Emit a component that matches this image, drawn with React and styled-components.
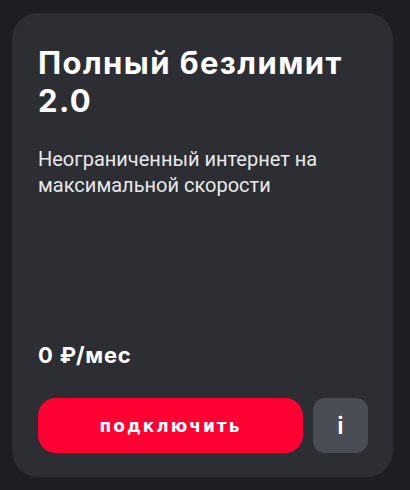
import React from "react";
import styled, { createGlobalStyle } from "styled-components";

const GlobalStyle = createGlobalStyle`
  html, body {
    margin: 0;
    padding: 0;
    background: #1d1e22;
  }
`;

const Page = styled.div`
  width: 410px;
  height: 490px;
  box-sizing: border-box;
  padding: 13px 17px 13px 12px;
`;

const Card = styled.div`
  height: 100%;
  box-sizing: border-box;
  background: #2d2e33;
  border-radius: 26px;
  padding: 31px 25px 24px 26px;
  display: flex;
  flex-direction: column;
`;

const Title = styled.h2`
  margin: 0;
  font-family: Inter, "DejaVu Sans", sans-serif;
  font-weight: 700;
  font-size: 31px;
  line-height: 38px;
  color: #ffffff;
  letter-spacing: 1.4px;
`;

const Description = styled.p`
  margin: 26px 0 0;
  font-family: Roboto, "Liberation Sans", sans-serif;
  font-size: 20px;
  line-height: 26px;
  color: #e8e8ea;
`;

const Price = styled.div`
  margin-top: auto;
  font-family: Inter, "DejaVu Sans", sans-serif;
  font-weight: 700;
  font-size: 22px;
  letter-spacing: 0.8px;
  color: #ffffff;
`;

const Actions = styled.div`
  display: flex;
  gap: 10px;
  margin-top: 30px;
`;

const ConnectButton = styled.button`
  flex: 1;
  height: 55px;
  border: none;
  border-radius: 18px;
  background: #ff0032;
  color: #ffffff;
  font-family: "DejaVu Sans", sans-serif;
  font-weight: bold;
  font-size: 17px;
  letter-spacing: 2px;
  cursor: pointer;
`;

const InfoButton = styled.button`
  width: 55px;
  height: 55px;
  border: none;
  border-radius: 12px;
  background: #4a4d55;
  color: #ffffff;
  font-family: Inter, "DejaVu Sans", sans-serif;
  font-weight: 600;
  font-size: 24px;
  cursor: pointer;
`;

export default function App() {
  return (
    <Page>
      <GlobalStyle />
      <Card>
        <Title>Полный безлимит 2.0</Title>
        <Description>
          Неограниченный интернет на
          <br />
          максимальной скорости
        </Description>
        <Price>0 ₽/мес</Price>
        <Actions>
          <ConnectButton>подключить</ConnectButton>
          <InfoButton>i</InfoButton>
        </Actions>
      </Card>
    </Page>
  );
}
